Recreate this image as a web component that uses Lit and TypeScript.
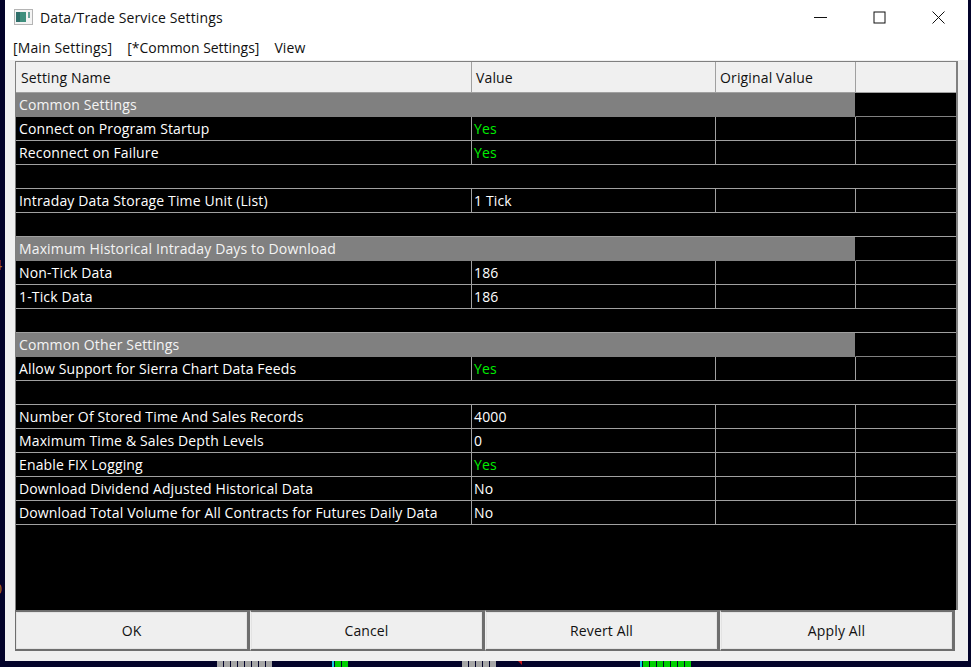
import { LitElement, html, css } from "lit";
import { customElement } from "lit/decorators.js";

type Row = { k: "sec" | "row" | "blank"; name?: string; val?: string; green?: boolean };
const rows: Row[] = [
  { k: "sec", name: "Common Settings" },
  { k: "row", name: "Connect on Program Startup", val: "Yes", green: true },
  { k: "row", name: "Reconnect on Failure", val: "Yes", green: true },
  { k: "blank" },
  { k: "row", name: "Intraday Data Storage Time Unit (List)", val: "1 Tick" },
  { k: "blank" },
  { k: "sec", name: "Maximum Historical Intraday Days to Download" },
  { k: "row", name: "Non-Tick Data", val: "186" },
  { k: "row", name: "1-Tick Data", val: "186" },
  { k: "blank" },
  { k: "sec", name: "Common Other Settings" },
  { k: "row", name: "Allow Support for Sierra Chart Data Feeds", val: "Yes", green: true },
  { k: "blank" },
  { k: "row", name: "Number Of Stored Time And Sales Records", val: "4000" },
  { k: "row", name: "Maximum Time & Sales Depth Levels", val: "0" },
  { k: "row", name: "Enable FIX Logging", val: "Yes", green: true },
  { k: "row", name: "Download Dividend Adjusted Historical Data", val: "No" },
  { k: "row", name: "Download Total Volume for All Contracts for Futures Daily Data", val: "No" },
];

@customElement("app-root")
export class AppRoot extends LitElement {
  static styles = css`
    :host { display: block; width: 971px; height: 667px; background: #03032a; font-family: "Open Sans", "Noto Sans", sans-serif; font-size: 14px; letter-spacing: 0.14px; color: #111; overflow: hidden; position: relative; }
    .window { position: absolute; left: 5px; top: 0; width: 963px; height: 661px; background: #f0f0f0; display: flex; flex-direction: column; }
    .top { background: #fff; height: 60px; display: flex; flex-direction: column; flex: none; }
    .title { height: 34px; display: flex; align-items: center; padding-left: 9px; gap: 7px; flex: none; }
    .title svg { flex: none; }
    .title span { flex: 1; }
    .caps { display: flex; }
    .cap { width: 59px; height: 34px; display: flex; align-items: center; justify-content: center; }
    .menu { display: flex; padding-left: 8px; height: 26px; align-items: center; gap: 15px; }
    .menu .tight { letter-spacing: -0.03px; }
    .body { padding: 1px 0 0 10px; display: flex; flex-direction: column; }
    .grid { width: 943px; height: 549px; box-sizing: border-box; background: #000; border: 1px solid #808080; border-bottom: 0; border-right: 2px solid #808080; }
    .head { display: grid; grid-template-columns: 456px 244px 140px 1fr; height: 31px; background: #f0f0f0; box-sizing: border-box; border-bottom: 1px solid #a0a0a0; }
    .head div { border-right: 1px solid #a0a0a0; padding-left: 4px; line-height: 31px; }
    .head div:first-child { padding-left: 5px; }
    .head div:last-child { border-right: 0; }
    .r { display: grid; grid-template-columns: 456px 244px 140px 1fr; height: 24px; box-sizing: border-box; color: #fff; line-height: 23px; }
    .r > div { border-right: 1px solid #a0a0a0; border-bottom: 1px solid #a0a0a0; padding-left: 2px; white-space: nowrap; }
    .r > div:first-child { padding-left: 3px; }
    .r > div:last-child { border-right: 0; }
    .r.blank > div { border-right: 0; }
    .green { color: #00ee00; }
    .sec .fill { grid-column: 1 / 4; background: #808080; background-clip: padding-box; border-right: 1px solid #000; border-bottom: 1px solid #808080; color: #f4f4f4; }
    .sec > div:last-child { background: #000; border-bottom-color: #808080; }
    .btns { display: flex; }
    .btn { width: 235px; height: 41px; box-sizing: border-box; background: #efefef; background-clip: padding-box; border-top: 2px solid #6e6e6e; border-bottom: 2px solid #6e6e6e; border-right: 3px solid #6e6e6e; border-left: 1px solid #f0f0f0; box-shadow: inset 0 0 0 1px #e3e3e3; display: flex; align-items: center; justify-content: center; color: #111; }
    .btn:first-child { border-left-color: #6e6e6e; }
    .strip { position: absolute; left: 0; top: 661px; width: 971px; height: 6px; display: flex; align-items: flex-end; }
    .gap { height: 6px; flex: none; }
    .seg { height: 6px; width: 6px; margin-right: 1px; flex: none; }
    .g { background: #a6a6a6; }
    .n { background: #00d000; }
    .c { background: #14c8dc; width: 2px; margin-right: 1px; }
    .red { width: 0; height: 0; border-top: 4px solid #c81414; border-left: 4px solid transparent; align-self: flex-start; flex: none; }
    .axis { position: absolute; left: -6px; color: #b06a20; font-size: 14px; line-height: 16px; }
    .axis.a { top: 257px; }
    .axis.b { top: 581px; }
  `;

  private segs(n: number, cls: string) {
    return Array.from({ length: n }, () => html`<div class="seg ${cls}"></div>`);
  }

  render() {
    return html`
      <span class="axis a">4</span><span class="axis b">0</span>
      <div class="window">
        <div class="top">
          <div class="title">
            <svg width="19" height="16" viewBox="0 0 19 16">
              <rect x="0.5" y="0.5" width="18" height="15" fill="#f4f4f4" stroke="#b4b4b4"/>
              <rect x="2" y="3" width="10" height="10" fill="#3f8f7d"/>
              <rect x="2" y="3" width="4" height="10" fill="#2f6f6a"/>
              <rect x="14" y="3" width="2" height="6" fill="#6aa39a"/>
            </svg>
            <span>Data/Trade Service Settings</span>
            <div class="caps">
              <div class="cap"><svg width="13" height="13" viewBox="0 0 13 13"><path d="M0 6.5H13" stroke="#111" fill="none"/></svg></div>
              <div class="cap"><svg width="13" height="13" viewBox="0 0 13 13"><rect x="1" y="1" width="11" height="11" stroke="#111" fill="none"/></svg></div>
              <div class="cap"><svg width="13" height="13" viewBox="0 0 13 13"><path d="M0.5 0.5L12.5 12.5M12.5 0.5L0.5 12.5" stroke="#111" fill="none"/></svg></div>
            </div>
          </div>
          <div class="menu"><span>[Main Settings]</span><span class="tight">[*Common Settings]</span><span>View</span></div>
        </div>
        <div class="body">
          <div class="grid">
            <div class="head"><div>Setting Name</div><div>Value</div><div>Original Value</div><div></div></div>
            ${rows.map((r) =>
              r.k === "sec"
                ? html`<div class="r sec"><div class="fill">${r.name}</div><div></div></div>`
                : r.k === "blank"
                ? html`<div class="r blank"><div></div><div></div><div></div><div></div></div>`
                : html`<div class="r"><div>${r.name}</div><div class=${r.green ? "green" : ""}>${r.val}</div><div></div><div></div></div>`
            )}
          </div>
          <div class="btns">
            <div class="btn">OK</div><div class="btn">Cancel</div><div class="btn">Revert All</div><div class="btn">Apply All</div>
          </div>
        </div>
      </div>
      <div class="strip">
        <div class="gap" style="width:217px"></div>${this.segs(8, "g")}
        <div class="gap" style="width:59px"></div><div class="seg c"></div>${this.segs(2, "n")}
        <div class="gap" style="width:113px"></div>${this.segs(5, "g")}
        <div class="gap" style="width:21px"></div><div class="red"></div>
        <div class="gap" style="width:118px"></div><div class="seg c"></div>${this.segs(7, "n")}
      </div>
    `;
  }
}
